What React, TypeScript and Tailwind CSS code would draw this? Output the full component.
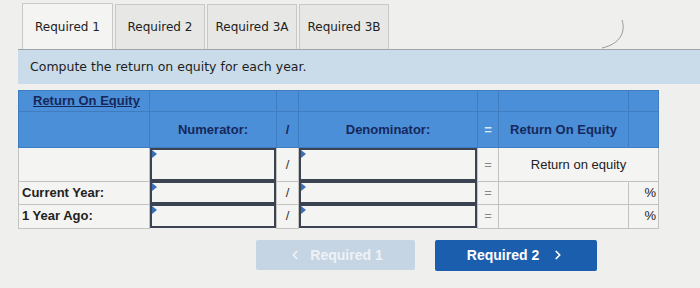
import { ChevronLeft, ChevronRight } from 'lucide-react';

const tabs = ['Required 1', 'Required 2', 'Required 3A', 'Required 3B'];

const rows = [
  { label: '', h: 'h-[33px]', result: true },
  { label: 'Current Year:', h: 'h-[23px]', result: false },
  { label: '1 Year Ago:', h: 'h-[24px]', result: false },
];

function InputBox({ h }: { h: string }) {
  return (
    <div className={`relative w-full border-2 border-[#3b4252] bg-[#f4f4f3] ${h}`}>
      <span className="absolute left-0 top-0 h-0 w-0 border-y-[4px] border-l-[5px] border-y-transparent border-l-[#3a6fb8]" />
    </div>
  );
}

export default function App() {
  const sans = { fontFamily: '"Liberation Sans", Arial, sans-serif' };
  const ver = { fontFamily: '"DejaVu Sans", Verdana, sans-serif' };

  return (
    <div className="relative h-[288px] w-[700px] overflow-hidden bg-[#efefed]">
      <svg className="absolute left-[600px] top-[18px]" width="30" height="34" viewBox="0 0 30 34">
        <path d="M22 2 C26 14 20 26 2 30" fill="none" stroke="#9a9a9a" strokeWidth="1" />
      </svg>

      {/* tabs */}
      <div className="flex items-end gap-[2px] pl-[22px] pt-[3px]" style={ver}>
        {tabs.map((t, i) => (
          <div
            key={t}
            className={
              i === 0
                ? 'flex h-[46px] w-[91px] items-center justify-center border border-b-0 border-[#c9c9c7] bg-[#f4f4f2] text-[12px] text-[#222]'
                : 'flex h-[45px] w-[90px] items-center justify-center border border-b-0 border-[#c9c9c7] bg-[#e7e7e5] text-[12px] text-[#222]'
            }
          >
            {t}
          </div>
        ))}
      </div>

      {/* instruction banner */}
      <div
        className="ml-[18px] flex h-[35px] items-center border-t border-[#9ea4a8] bg-[#cadce9] pl-[12px] text-[12.5px] text-[#1e1e1e]"
        style={ver}
      >
        Compute the return on equity for each year.
      </div>

      {/* table */}
      <table className="ml-[18px] mt-[6px] w-[640px] table-fixed border-collapse text-[13px]" style={sans}>
        <colgroup>
          <col className="w-[131px]" />
          <col className="w-[127px]" />
          <col className="w-[22px]" />
          <col className="w-[179px]" />
          <col className="w-[21px]" />
          <col className="w-[130px]" />
          <col className="w-[30px]" />
        </colgroup>
        <thead>
          <tr className="h-[21px] bg-[#4b8fd8]">
            <th className="whitespace-nowrap border border-[#3f7cc0] px-[14px] text-left font-bold text-[#16285a] underline">
              Return On Equity
            </th>
            <th className="border border-[#3f7cc0]" />
            <th className="border border-[#3f7cc0]" />
            <th className="border border-[#3f7cc0]" />
            <th className="border border-[#3f7cc0]" />
            <th className="border border-[#3f7cc0]" />
            <th className="border border-[#3f7cc0]" />
          </tr>
          <tr className="h-[36px] bg-[#4b8fd8] font-bold text-[#16285a]">
            <th className="border border-[#3f7cc0]" />
            <th className="border border-[#3f7cc0] text-center">Numerator:</th>
            <th className="border border-[#3f7cc0] text-center">/</th>
            <th className="border border-[#3f7cc0] text-center">Denominator:</th>
            <th className="border border-[#3f7cc0] text-center text-[#dfe9f5]">=</th>
            <th className="border border-[#3f7cc0] text-center">Return On Equity</th>
            <th className="border border-[#3f7cc0]" />
          </tr>
        </thead>
        <tbody className="bg-[#f4f4f3] text-[#222]">
          {rows.map((r, i) => (
            <tr key={i}>
              <td className="border border-[#c2c2c0] px-[3px] font-bold">{r.label}</td>
              <td className="p-0 align-top">
                <InputBox h={r.h} />
              </td>
              <td className="border border-[#c2c2c0] text-center text-[#333]">/</td>
              <td className="p-0 align-top">
                <InputBox h={r.h} />
              </td>
              <td className="border border-[#c2c2c0] text-center text-[#888]">=</td>
              {r.result ? (
                <td colSpan={2} className="border border-[#c2c2c0] text-center">
                  Return on equity
                </td>
              ) : (
                <>
                  <td className="border border-[#c2c2c0]" />
                  <td className="border border-[#c2c2c0] pr-[2px] text-right">%</td>
                </>
              )}
            </tr>
          ))}
        </tbody>
      </table>

      {/* nav buttons */}
      <div className="ml-[256px] mt-[11px] flex items-center gap-[20px]" style={sans}>
        <div className="flex h-[30px] w-[159px] items-center justify-center gap-[8px] rounded-[2px] bg-[#c6d5e3] text-[14px] font-bold text-[#eef2f6]">
          <ChevronLeft size={14} strokeWidth={3} />
          Required 1
        </div>
        <div className="flex h-[31px] w-[162px] items-center justify-center gap-[12px] rounded-[2px] bg-[#1b5eae] text-[14px] font-bold text-white">
          Required 2
          <ChevronRight size={14} strokeWidth={3} />
        </div>
      </div>
    </div>
  );
}
